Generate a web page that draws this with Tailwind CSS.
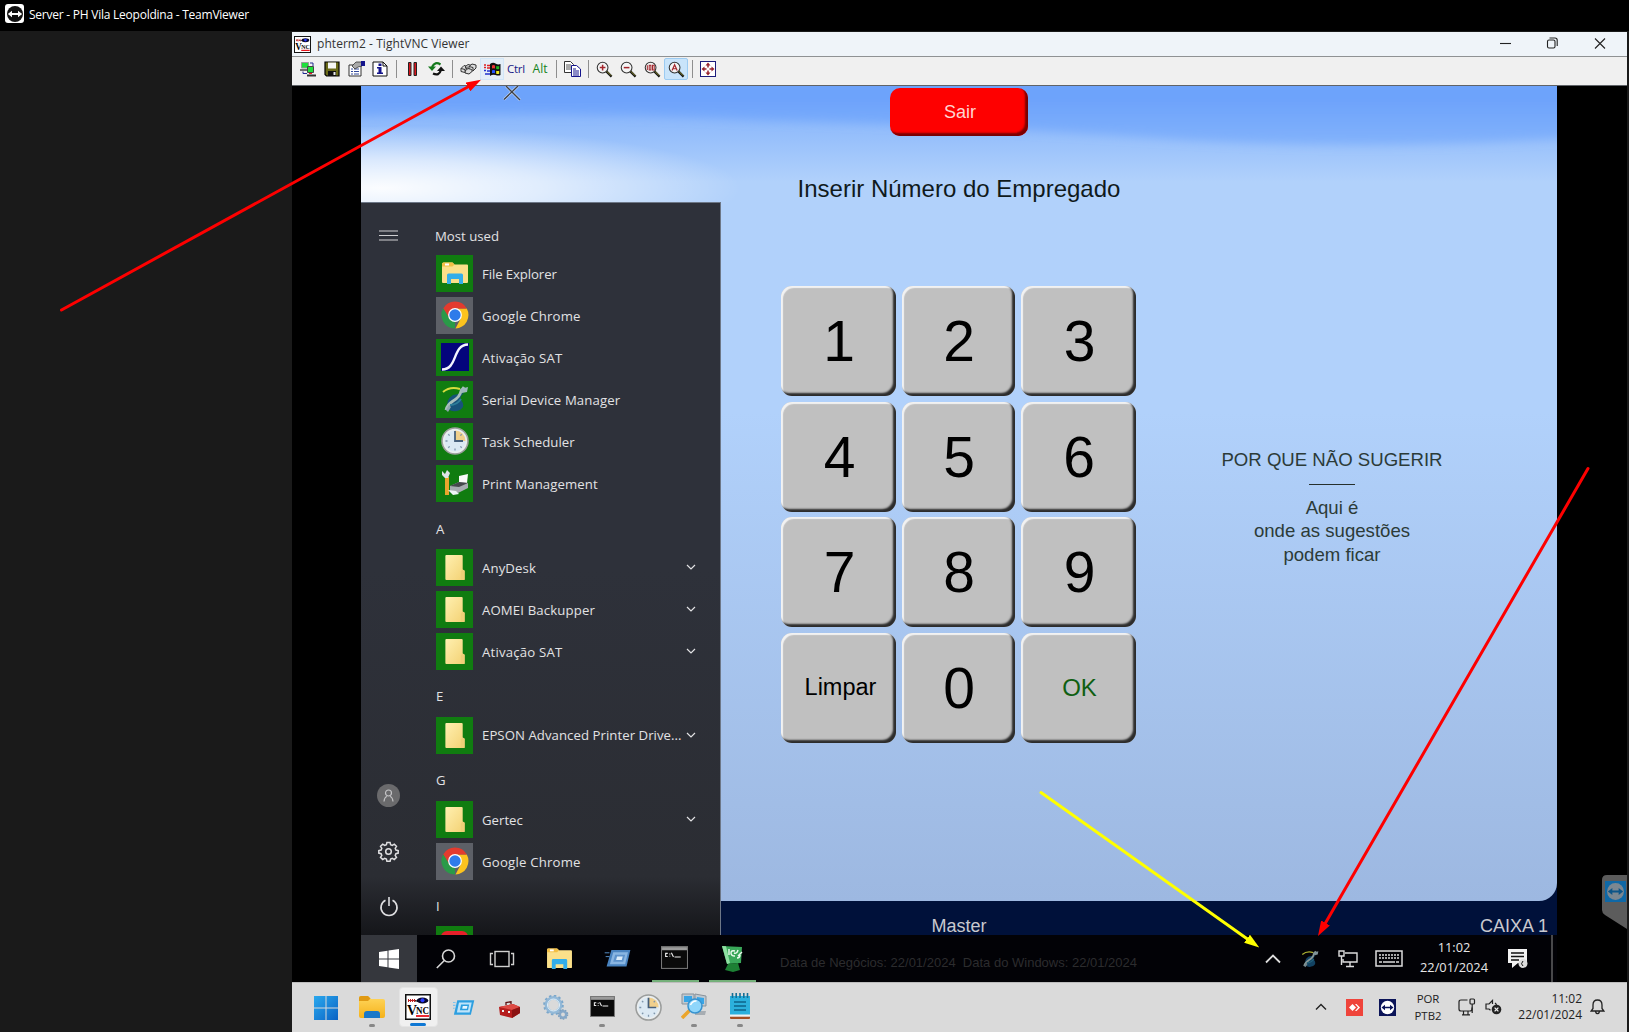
<!DOCTYPE html>
<html lang="pt-BR">
<head>
<meta charset="utf-8">
<title>Server - PH Vila Leopoldina - TeamViewer</title>
<script src="https://cdn.jsdelivr.net/npm/@tailwindcss/browser@4"></script>
</head>
<body class="w-[1629px] h-[1032px] overflow-hidden bg-[#1a1a1a] font-['Open_Sans','Noto_Sans',sans-serif] relative flex flex-col">

<!-- shared icon symbols -->
<svg width="0" height="0" class="absolute">
  <defs>
    <linearGradient id="fold" x1="0" y1="0" x2="1" y2="1"><stop offset="0" stop-color="#fff0b0"/><stop offset="1" stop-color="#f3d173"/></linearGradient>
    <linearGradient id="yel" x1="0" y1="0" x2="0" y2="1"><stop offset="0" stop-color="#ffd75e"/><stop offset="1" stop-color="#f5b21b"/></linearGradient>
    <linearGradient id="win" x1="0" y1="0" x2="1" y2="1"><stop offset="0" stop-color="#2aa9ee"/><stop offset="1" stop-color="#0a62c4"/></linearGradient>
    <symbol id="explorer" viewBox="0 0 28 24">
      <path d="M1 3q0-1.5 1.500-1.500h9l2 2H26q1 0 1 1V21q0 1-1 1H2q-1 0-1-1z" fill="#fbe08a"/>
      <path d="M1 3q0-1.500 1.500-1.500h9l2 2-2 2H1z" fill="#f3bf45"/><rect x="4" y="2.500" width="4" height="2" fill="#fff"/>
      <path d="M6 23v-9q0-1.500 1.500-1.500h13q1.500 0 1.500 1.500v9h-4v-5h-8v5z" fill="#33aeea"/>
    </symbol>
    <symbol id="chrome" viewBox="0 0 28 28">
      <path d="M14 14V27.500A13.500 13.500 0 0 1 2.300 7.250z" fill="#2a9a48"/>
      <path d="M14 7.500H25.800A13.500 13.500 0 0 1 14.500 27.500L20 17z" fill="#fcc31e"/>
      <path d="M14 7.500H25.800A13.500 13.500 0 0 0 2.300 7.300L8.300 17z" fill="#e33b2e"/>
      <circle cx="14" cy="14" r="6.900" fill="#fff"/><circle cx="14" cy="14" r="5.700" fill="#2f7bea"/>
    </symbol>
    <symbol id="sat" viewBox="0 0 28 28"><rect width="28" height="28" fill="#04047c"/><path d="M1 26.500C17 26.500 11 2 27 1.500" fill="none" stroke="#f4f4ff" stroke-width="2.400"/></symbol>
    <symbol id="serial" viewBox="0 0 28 28">
      <path d="M12 10q-8 5-5 14 5 4 12 1 6-4 1-10-2-3 3-7" fill="#17527a"/>
      <path d="M2 7q7-6 17-3" fill="none" stroke="#d6dc3d" stroke-width="2"/>
      <path d="M5 25q1-5 7-9 7-4 8-10l3-4" fill="none" stroke="#a9bfbc" stroke-width="2.800"/>
      <path d="M19 4l8-2-1 5-5 1z" fill="#9fb8bd"/><path d="M9 20q7 0 11-6" fill="none" stroke="#2d7c99" stroke-width="2"/>
      <path d="M5 25l3-5 2 2-3 5z" fill="#8ea6ad"/>
    </symbol>
    <symbol id="clock" viewBox="0 0 28 28">
      <circle cx="14" cy="14" r="13" fill="#e9edef" stroke="#9b9d9c" stroke-width="1.600"/>
      <path d="M14 14V3.500A10.500 10.500 0 0 1 24.500 14z" fill="#f0cf8c"/>
      <path d="M14 3.500A10.500 10.500 0 1 0 24.500 14H14z" fill="#dbe9f4"/>
      <path d="M14 4v10h8" fill="none" stroke="#47607c" stroke-width="1.800"/>
      <path d="M4.500 14h2M14 21.500v2M7.300 7.300l1.300 1.300M7.300 20.700l1.300-1.300M20.700 20.700l-1.300-1.300M20.700 7.300l-1.300 1.300" stroke="#7f96ab" stroke-width="1.300"/>
    </symbol>
    <symbol id="print" viewBox="0 0 28 28">
      <path d="M4 8h4v18H4z" fill="#e9a62c"/><path d="M1 2l3 3 2-4 3 3-2 5H4L1 6z" fill="#dfe4e6"/>
      <path d="M18 7l9-2-1 9-8 1z" fill="#fafafa"/><path d="M9 17l9-4 9 1v5l-10 5-8-2z" fill="#a7acb1"/><path d="M9 17l9-4 9 1-9 4z" fill="#45484c"/><path d="M7 21l8 1 3 3-6 1z" fill="#eef4f8"/>
    </symbol>
    <symbol id="folder" viewBox="0 0 22 26"><path d="M1 1q0-1 1-1h16q1 0 1 1v14l2 1.500V25q0 1-1 1H2q-1 0-1-1z" fill="url(#fold)"/><path d="M17 17l2-2 2 1.500V26h-4z" fill="#efcf78"/></symbol>
    <symbol id="run" viewBox="0 0 28 20"><path d="M7 1.500H27L23 18.500H3z" fill="#2d9fe0" /><path d="M9 4H24L21.500 15.800H6.500z" fill="#bfe4fa"/><path d="M11.500 6.500H21L19.600 13.300H10z" fill="#2d9fe0"/><path d="M13.500 8.300H19L18.300 11.500H12.800z" fill="#e6f6ff"/><path d="M0 4h5M1 7.500h4M0 11h4" stroke="#7cc4ee" stroke-width="1.200"/></symbol>
    <symbol id="cmd" viewBox="0 0 26 22"><rect x=".5" y=".5" width="25" height="21" fill="#0a0a0a" stroke="#777"/><rect x="1" y="1" width="24" height="3" fill="#9b9b9b"/><path d="M6.500 7H4.500v3h2M8.500 7.200v.8M8.500 9.300v.8M10 6.500l2 4M13 10.500h6" stroke="#eee" stroke-width="1.100" fill="none"/></symbol>
    <symbol id="chev" viewBox="0 0 10 6"><path d="M1 1l4 4 4-4" fill="none" stroke="currentColor" stroke-width="1.200"/></symbol>
    <symbol id="vnc" viewBox="0 0 26 26">
      <rect x=".75" y=".75" width="24.500" height="24.500" fill="#fff" stroke="#111" stroke-width="1.500"/>
      <path d="M3 5l3 3M6 5L3 8M7 5l3 3M10 5L7 8M3 6.500h8" stroke="#b22" stroke-width="1"/><ellipse cx="17.500" cy="6.500" rx="5.800" ry="3" fill="#0a0a30"/><circle cx="17.500" cy="6.300" r="2" fill="#2a3cff"/><path d="M10 7h3" stroke="#000"/>
      <text x="2" y="21" font-family="Liberation Serif, serif" font-weight="bold" font-size="15" textLength="10" lengthAdjust="spacingAndGlyphs">V</text>
      <text x="11" y="19.500" font-family="Liberation Serif, serif" font-weight="bold" font-size="10" textLength="13" lengthAdjust="spacingAndGlyphs">NC</text>
      <path d="M11 22h13" stroke="#e8141c" stroke-width="1.800"/>
    </symbol>
    <symbol id="tvarrow" viewBox="0 0 18 18"><circle cx="9" cy="9" r="8" fill="var(--bg)"/><path d="M1.800 9l4.200-3.200v2.200h6V5.800L16.200 9 12 12.200V10H6v2.200z" fill="var(--fg)"/></symbol>
    <symbol id="lens" viewBox="0 0 18 18"><circle cx="7" cy="7" r="5.700" fill="#f4f4f4" stroke="#333" stroke-width="1.100"/><path d="M11 11l5.500 5.500" stroke="#111" stroke-width="2.400"/><path d="M11.500 11l4.500 4.500" stroke="#b8b83a" stroke-width=".8"/></symbol>
  </defs>
</svg>

<!-- TeamViewer title bar -->
<header class="h-[31px] bg-black flex items-center pl-[5px] pb-[2px] shrink-0">
  <span class="w-[19px] h-[19px] mt-[-2px] rounded-[3px] bg-white flex items-center justify-center"><svg class="w-[18px] h-[18px] [--bg:#111] [--fg:#fff]"><use href="#tvarrow"/></svg></span>
  <span class="ml-[5px] text-white text-[12px] leading-4 tracking-[-0.24px] whitespace-nowrap">Server - PH Vila Leopoldina - TeamViewer</span>
</header>

<div class="flex flex-1 min-h-0">
  <aside class="w-[292px] shrink-0"></aside>
  <main class="w-[1335px] mt-px flex flex-col shrink-0">
    <!-- VNC title bar -->
    <div class="h-[25px] bg-[#eff4f9] border-b border-[#8f9294] flex items-center shrink-0">
      <svg class="ml-[2px] w-[17px] h-[17px]"><use href="#vnc"/></svg>
      <span class="ml-[6px] text-[12px] leading-4 tracking-[0.050px] text-[#333] whitespace-nowrap">phterm2 - TightVNC Viewer</span>
      <svg class="ml-auto mr-[15px] mt-[-1px]" width="120" height="16" fill="none" stroke="#222" stroke-width="1.100"><path d="M8 7.500h11"/><rect x="55.500" y="4" width="7.500" height="8" rx="1.500"/><path d="M57.500 2h5.500q2.200 0 2.200 2.200V10"/><path d="M103 2.500l10 10M113 2.500l-10 10"/></svg>
    </div>
    <!-- VNC toolbar -->
    <div class="h-[29px] bg-[#f0f0f0] border-b border-[#5f6368] flex items-center pl-1 pb-[4px] text-[12px] shrink-0">
      <span class="w-6 flex justify-center"><svg width="16" height="16"><path d="M1.500 1.500h7v5.500h-7z" fill="#1ee03a" stroke="#999"/><path d="M0 9h7" stroke="#444" stroke-width="1.500"/><path d="M7.500 5.500h6v6h-6z" fill="#1ee03a" stroke="#444"/><path d="M7 13.500h9v2H7z" fill="#333"/><path d="M10 2h3v3M3 10.500v2h4" fill="none" stroke="#222a90"/><path d="M9 12.500h3" stroke="#e22"/></svg></span>
      <span class="w-6 flex justify-center"><svg width="16" height="16"><path d="M1 1h14v14H2.500L1 13.500z" fill="#6b6b1a" stroke="#000" stroke-width="1.200"/><path d="M4 1.500h8v6H4z" fill="#f6f6f6"/><path d="M4 10h8v5H4z" fill="#111"/><path d="M9.500 11h2v3h-2z" fill="#eee"/></svg></span>
      <span class="w-6 flex justify-center"><svg width="17" height="16"><path d="M1 4h12v11H1z" fill="#fff" stroke="#333"/><path d="M3 8h2M6 8h5M3 10.500h2M6 10.500h5M3 13h2M6 13h5" stroke="#334a9c"/><path d="M4 5l4-4h6v4l-4 1-3 2z" fill="#a9a9a9" stroke="#333" stroke-width=".8"/><path d="M13 0h4v5h-4z" fill="#14148c"/></svg></span>
      <span class="w-6 flex justify-center"><svg width="16" height="16"><path d="M1 1h10l4 4v10H1z" fill="#fff" stroke="#111"/><path d="M11 1v4h4" fill="none" stroke="#111"/><path d="M6.500 2.500h3v2.500h-3zM5 6h4.500v5.500H11V13H5v-1.500h1.500v-4H5z" fill="#14148c"/></svg></span>
      <span class="w-2 flex justify-center"><i class="w-px h-[18px] bg-[#8e8e8e]"></i></span>
      <span class="w-6 flex justify-center"><svg width="9" height="14"><path d="M.5.500h2.500v13H.5zM6 .5h2.500v13H6z" fill="#d8141c" stroke="#222"/></svg></span>
      <span class="w-6 flex justify-center"><svg width="17" height="16" fill="none" stroke-width="2.200"><path d="M12.500 3.500Q7 0 4 6" stroke="#157a1d"/><path d="M0 5.500h8L4 10z" fill="#157a1d"/><path d="M5 12.500q6 3 8-3.500" stroke="#111"/><path d="M9 10h8l-4-4.500z" fill="#111"/></svg></span>
      <span class="w-2 flex justify-center"><i class="w-px h-[18px] bg-[#8e8e8e]"></i></span>
      <span class="w-6 flex justify-center"><svg width="17" height="12" fill="#ddd" stroke="#333"><path d="M1 5.500l3-3 4 1v3l-3 3-4-1z"/><path d="M5 4l3-2.500 4 1v3l-3 2z"/><path d="M9 3.500L12 1l4 1v3l-3 3-4-1z"/><path d="M5 8l3-2.500 4 1v2L9 11l-4-1z"/><path d="M1 5.500l4 1v3M5 6.500l3-3M9 3.500l4 1v3"/></svg></span>
      <span class="w-6 h-[22px] flex items-center justify-center bg-[#e3eef8] border border-[#d2e6f7]"><svg width="17" height="15" class="shrink-0"><path d="M6 2Q9 0 11.500 1.500T16.500 2V13q-2 1-5 0t-5.500 1z" fill="#111"/><path d="M8 3.500q1.500-1 3 0v3q-1.500-.7-3 0z" fill="#e33"/><path d="M12.200 4q1.500.6 3 0v3q-1.500.6-3 0z" fill="#2b2"/><path d="M8 8.300q1.500-.8 3 0v3q-1.500-.7-3 0z" fill="#25f"/><path d="M12.200 8.800q1.500.6 3 0v3q-1.500.6-3 0z" fill="#ee2"/><path d="M0 3h2M3 3.500h3M0 5.500h2M3 6h3" stroke="#d22" stroke-width="1.500"/><path d="M0 8.500h2M3 9h3M1 12h5" stroke="#23c" stroke-width="1.500"/></svg></span>
      <span class="w-6 text-center text-[11.500px] leading-4 tracking-[-0.2px] text-[#1a1a86]">Ctrl</span>
      <span class="w-6 text-center leading-4 text-[#17821d]">Alt</span>
      <span class="w-2 flex justify-center"><i class="w-px h-[18px] bg-[#8e8e8e]"></i></span>
      <span class="w-6 flex justify-center"><svg width="17" height="16"><path d="M.5.500h6l3 3v8h-9z" fill="#fff" stroke="#333"/><path d="M2 4h5M2 6h5M2 8h5" stroke="#555"/><path d="M7.500 4.500h5l4 3.500v7.500h-9z" fill="#fff" stroke="#14148c"/><path d="M9 8h3M9 10h6M9 12h6M9 14h6" stroke="#14148c"/></svg></span>
      <span class="w-2 flex justify-center"><i class="w-px h-[18px] bg-[#8e8e8e]"></i></span>
      <span class="w-6 flex justify-center"><svg width="17" height="17" viewBox="0 0 18 18"><use href="#lens"/><path d="M4 7h6M7 4v6" stroke="#a3262c" stroke-width="1.600"/></svg></span>
      <span class="w-6 flex justify-center"><svg width="17" height="17" viewBox="0 0 18 18"><use href="#lens"/><path d="M4 7h6" stroke="#a3262c" stroke-width="1.600"/></svg></span>
      <span class="w-6 flex justify-center"><svg width="17" height="17" viewBox="0 0 18 18"><use href="#lens"/><path d="M3.500 4.500v5M5.500 4.500h1.800v5H5.500zM9 4.500h1.800v5H9z" fill="none" stroke="#a3262c" stroke-width="1.100"/></svg></span>
      <span class="w-6 h-[22px] flex items-center justify-center rounded-[2px] bg-[#c9e4fa] border border-[#9ccbf2]"><svg width="17" height="17" viewBox="0 0 18 18"><use href="#lens"/><path d="M4.300 10L7 4l2.700 6M5.200 8.200h3.600" fill="none" stroke="#a3262c" stroke-width="1.300"/></svg></span>
      <span class="w-2 flex justify-center"><i class="w-px h-[18px] bg-[#8e8e8e]"></i></span>
      <span class="w-6 flex justify-center"><svg width="16" height="16"><rect x=".5" y=".5" width="15" height="15" fill="#fff" stroke="#1c1c7c"/><path d="M8 1.500l2.500 3H5.500zM8 14.500l-2.500-3h5zM1.500 8l3-2.500v5zM14.500 8l-3-2.500v5z" fill="#96222c"/><path d="M8 3v3.500M8 9.500V13M3 8h3.500M9.500 8H13" stroke="#96222c" stroke-width="1.500"/></svg></span>
    </div>

    <!-- remote desktop -->
    <div class="h-[896px] bg-black flex pl-[69px] shrink-0">
      <div class="w-[1196px] h-[896px] relative overflow-hidden flex flex-col bg-[#00113a]">
        <section class="h-[815px] relative overflow-hidden shrink-0 rounded-br-[18px] bg-linear-to-b from-[#b1d1fb] from-40% to-[#9db8e1]">
          <svg class="absolute inset-0" width="1196" height="150">
            <defs>
              <linearGradient id="sky" x1="0" y1="0" x2="0" y2="1"><stop offset="0" stop-color="#70a4fd"/><stop offset=".4" stop-color="#6ca2fb"/><stop offset="1" stop-color="#82b2fb"/></linearGradient>
              <linearGradient id="haze" x1="0" y1="0" x2="0" y2="1"><stop offset=".3" stop-color="#8ab7fb"/><stop offset="1" stop-color="#b1d1fb"/></linearGradient>
              <radialGradient id="glow"><stop offset="0" stop-color="#fff" stop-opacity=".95"/><stop offset=".45" stop-color="#fff" stop-opacity=".6"/><stop offset="1" stop-color="#fff" stop-opacity="0"/></radialGradient>
              <filter id="b" x="-10%" y="-50%" width="120%" height="200%"><feGaussianBlur stdDeviation="5"/></filter>
            </defs>
            <rect width="1196" height="96" fill="url(#haze)"/>
            <path d="M-20 -20H1230V50Q1000 66 800 52T400 34Q200 24 -20 30z" fill="url(#sky)" filter="url(#b)"/>
            <ellipse cx="20" cy="102" rx="360" ry="62" fill="url(#glow)"/>
          </svg>
          <div class="relative flex flex-col items-center pt-[2px] font-['Liberation_Sans',sans-serif]">
            <button class="w-[138px] h-[48px] rounded-[10px] bg-[#fe0000] shadow-[inset_-3px_-3px_2px_#7a0000] text-[18px] leading-6 text-[#ffd4d0] pl-[2px]">Sair</button>
            <h1 class="mt-[39px] h-[28px] text-[24px] leading-7 text-[#101a1c] whitespace-nowrap">Inserir Número do Empregado</h1>
            <div class="mt-[83px] w-full flex pl-[420px]">
              <div class="grid grid-cols-[115px_113px_115px] gap-x-[6px] gap-y-[5.500px] auto-rows-[110px] text-[57px] text-black">
                <button class="rounded-[11px] bg-[#c0c0c0] shadow-[inset_-3px_-3px_2px_#2c2c2c,inset_2px_2px_1px_#f2f2f2] pt-[2px] pl-[1px]">1</button>
                <button class="rounded-[11px] bg-[#c0c0c0] shadow-[inset_-3px_-3px_2px_#2c2c2c,inset_2px_2px_1px_#f2f2f2] pt-[2px] pl-[1px]">2</button>
                <button class="rounded-[11px] bg-[#c0c0c0] shadow-[inset_-3px_-3px_2px_#2c2c2c,inset_2px_2px_1px_#f2f2f2] pt-[2px] pl-[2px]">3</button>
                <button class="rounded-[11px] bg-[#c0c0c0] shadow-[inset_-3px_-3px_2px_#2c2c2c,inset_2px_2px_1px_#f2f2f2] pt-[2px] pl-[2px]">4</button>
                <button class="rounded-[11px] bg-[#c0c0c0] shadow-[inset_-3px_-3px_2px_#2c2c2c,inset_2px_2px_1px_#f2f2f2] pt-[2px] pl-[1px]">5</button>
                <button class="rounded-[11px] bg-[#c0c0c0] shadow-[inset_-3px_-3px_2px_#2c2c2c,inset_2px_2px_1px_#f2f2f2] pt-[2px] pl-[1px]">6</button>
                <button class="rounded-[11px] bg-[#c0c0c0] shadow-[inset_-3px_-3px_2px_#2c2c2c,inset_2px_2px_1px_#f2f2f2] pt-[2px] pl-[2px]">7</button>
                <button class="rounded-[11px] bg-[#c0c0c0] shadow-[inset_-3px_-3px_2px_#2c2c2c,inset_2px_2px_1px_#f2f2f2] pt-[2px] pl-[1px]">8</button>
                <button class="rounded-[11px] bg-[#c0c0c0] shadow-[inset_-3px_-3px_2px_#2c2c2c,inset_2px_2px_1px_#f2f2f2] pt-[2px] pl-[2px]">9</button>
                <button class="rounded-[11px] bg-[#c0c0c0] shadow-[inset_-3px_-3px_2px_#2c2c2c,inset_2px_2px_1px_#f2f2f2] pt-[1px] pl-[4px] text-[23.500px]">Limpar</button>
                <button class="rounded-[11px] bg-[#c0c0c0] shadow-[inset_-3px_-3px_2px_#2c2c2c,inset_2px_2px_1px_#f2f2f2] pt-[2px] pl-[1px]">0</button>
                <button class="rounded-[11px] bg-[#c0c0c0] shadow-[inset_-3px_-3px_2px_#2c2c2c,inset_2px_2px_1px_#f2f2f2] pl-[2px] text-[24px] text-[#0f5f12]">OK</button>
              </div>
              <div class="flex-1 pr-[29px] pt-[162px] flex flex-col items-center text-[18.600px] leading-[23.500px] text-[#2c3b38] text-center whitespace-nowrap">
                <p>POR QUE NÃO SUGERIR</p>
                <i class="w-[46px] h-px mt-[12px] mb-[11px] bg-[#26302c]"></i>
                <p>Aqui é<br>onde as sugestões<br>podem ficar</p>
              </div>
            </div>
          </div>
        </section>
        <div class="h-[34px] grid grid-cols-3 items-center font-['Liberation_Sans',sans-serif] text-[18px] leading-6 text-[#c9c9cf] pt-[15px] shrink-0 content-center">
          <span></span><span class="text-center">Master</span><span class="text-right pr-[9px]">CAIXA 1</span>
        </div>
        <!-- remote taskbar -->
        <div class="h-[47px] relative bg-[#020206] flex items-center text-[#d8d8d8] shrink-0">
          <span class="w-14 h-full bg-[#35373d] flex items-center justify-center"><svg width="20" height="20" fill="#fff"><path d="M0 3l8.500-1.300V9.400H0zM9.500 1.500L20 0v9.400H9.500zM0 10.500h8.500v7.800L0 17zM9.500 10.500H20V20l-10.500-1.500z"/></svg></span>
          <span class="w-[57px] flex justify-center"><svg width="20" height="20" fill="none" stroke="#d8d8d8" stroke-width="1.600"><circle cx="12.500" cy="7" r="6"/><path d="M8.300 11.500L.8 19"/></svg></span>
          <span class="w-14 flex justify-center pr-px"><svg width="26" height="18" fill="none" stroke="#d0d0d0" stroke-width="1.400"><rect x="6" y="1.500" width="14" height="15"/><path d="M4 3.500H1.500v11H4M22 3.500h2.500v11H22"/></svg></span>
          <span class="w-[59px] flex justify-center"><svg width="27" height="23"><use href="#explorer"/></svg></span>
          <span class="w-[58px] flex justify-center"><svg width="28" height="19" viewBox="0 0 28 20"><path d="M7 1H27L23 18.500H2z" fill="#4983c0"/><path d="M9 3.500H24.500L21.500 16H5.500z" fill="#8ab6e2"/><path d="M11 6H21.500L19.500 13.500H9z" fill="#5d92cb"/><path d="M13 8h6l-1 3.500h-6z" fill="#dcecfa"/><path d="M0 4h5M1 8h4" stroke="#5792ca"/></svg></span>
          <span class="w-[57px] h-full flex items-center justify-center pr-[2px]"><svg width="27" height="23" class="mt-[-2px]"><use href="#cmd"/></svg></span>
          <span class="w-14 h-full flex items-center justify-center"><svg width="24" height="27"><path d="M2 1l20 1-1 16-14 1z" fill="#3aa85a"/><path d="M2 1l5 18 3-1L6 1.200z" fill="#8fe0a2"/><path d="M8 19l10-1 2 7-7 2-8-2z" fill="#1d8034"/><path d="M15 6q-4-1-4 2t4 3M18 5q-1 4-4 3M9 4v6M18 11l4-4M17 13q3 0 3-3" fill="none" stroke="#eefbf0" stroke-width="1.400"/></svg></span>
          <i class="absolute left-[291px] bottom-0 w-[47px] h-[2px] bg-[#74b07a]"></i>
          <i class="absolute left-[348px] bottom-0 w-[47px] h-[2px] bg-[#74b07a]"></i>
          <span class="ml-[20px] mt-[9px] w-[371px] font-['Liberation_Sans',sans-serif] text-[13px] leading-4 text-[#2c2c2e] whitespace-pre">Data de Negócios: 22/01/2024  Data do Windows: 22/01/2024</span>
          <span class="ml-[114px] flex items-center">
            <svg width="16" height="10" fill="none" stroke="#ddd" stroke-width="1.800"><path d="M1 8.500L8 1.500l7 7"/></svg>
            <svg width="18" height="18" viewBox="0 0 28 28" class="ml-[20px] opacity-80"><use href="#serial"/></svg>
            <svg width="20" height="18" fill="none" stroke="#ddd" stroke-width="1.400" class="ml-[19px]"><path d="M7 3h12v9H5V9M12 12v4M8 16.500h8"/><path d="M1 1h5v5H1zM3.500 6v9"/></svg>
            <svg width="28" height="17" class="ml-[17px]" fill="none" stroke="#ddd"><rect x="1" y="1" width="26" height="15" stroke-width="1.500"/><path d="M4 5h20M4 8h20" stroke-width="1.500" stroke-dasharray="2 1"/><path d="M4 12h3M8 12h12M21 12h3" stroke-width="1.500"/></svg>
          </span>
          <span class="ml-[16px] w-[70px] text-center text-[12.800px] leading-[20.500px] whitespace-nowrap text-[#e6e6e6] pb-[3px]">11:02<br>22/01/2024</span>
          <svg width="20" height="20" class="ml-[19px]"><path d="M0 0h19v14H10l-6 5v-5H0z" fill="#f2f2f2"/><path d="M3 4h13M3 7.500h13M3 11h8" stroke="#111" stroke-width="1.300"/><circle cx="15" cy="14.500" r="4.500" fill="#ddd"/><path d="M15 12q-3 3 0 5" stroke="#111" fill="none"/></svg>
          <i class="ml-auto mr-[4px] w-[2px] h-full bg-[#48484a]"></i>
        </div>

        <!-- close mark of the kiosk window -->
        <svg class="absolute left-[142px] top-0" width="20" height="16"><path d="M1 13.500L15 0M3 0l14 14" stroke="#e7eef8" stroke-width="2.600" opacity=".7"/><path d="M1 13.500L15 0M3 0l14 14" stroke="#3e4046" stroke-width="1.400"/></svg>

        <!-- start menu -->
        <div class="absolute left-0 top-[116px] w-[360px] h-[733px] overflow-hidden flex border-t border-r border-[#6d7787] bg-linear-to-b from-[#2e313a] from-50% via-[#2b2d33] via-92% to-[#15161a] text-[#e2e2e4] text-[13.200px]">
          <nav class="w-[75px] flex flex-col items-center pr-[20px] pt-[27px] pb-[18px] shrink-0">
            <svg width="19" height="11" stroke="#cfcfd2" stroke-width="1.200"><path d="M0 1h19M0 5.500h19M0 10h19"/></svg>
            <span class="mt-auto w-[23px] h-[23px] rounded-full bg-[#6a6a6c] flex items-center justify-center"><svg width="11" height="13" fill="none" stroke="#c4c4c6" stroke-width="1.200"><circle cx="5.500" cy="4" r="3"/><path d="M1 12.500q.5-4.500 3-5M10 12.500q-.5-4.500-3-5"/></svg></span>
            <svg class="mt-[34px]" width="21" height="21" fill="none" stroke="#dedee0" stroke-width="1.500"><circle cx="10.500" cy="10.500" r="2.800"/><path d="M8.900 1.500h3.200l.5 2.300 1.700.7 2-1.300 2.200 2.200-1.300 2 .7 1.700 2.300.5v2.500l-2.300.6-.7 1.700 1.300 2-2.200 2.200-2-1.300-1.700.7-.5 2.200H8.900l-.5-2.200-1.700-.7-2 1.300-2.200-2.200 1.300-2-.7-1.700-2.300-.6V9.600l2.300-.5.7-1.700-1.300-2 2.200-2.200 2 1.300 1.700-.7z"/></svg>
            <svg class="mt-[34px]" width="20" height="21" fill="none" stroke="#dedee0" stroke-width="1.600"><path d="M6.500 4.300a8 8 0 1 0 7 0M10 1v9"/></svg>
          </nav>
          <ul class="w-[260px] pt-[7px] [&_svg]:shrink-0 whitespace-nowrap">
            <li class="h-[42px] flex items-end pb-[6px] leading-5 -ml-px">Most used</li>
            <li class="h-[42px] flex items-center"><span class="w-[37px] h-[37px] bg-[#107c10] flex items-center justify-center"><svg width="28" height="24"><use href="#explorer"/></svg></span><span class="ml-[9px] pt-[3px] tracking-[-0.1px]">File Explorer</span></li>
            <li class="h-[42px] flex items-center"><span class="w-[37px] h-[37px] bg-[#5d6067] flex items-center justify-center"><svg width="28" height="28"><use href="#chrome"/></svg></span><span class="ml-[9px] pt-[3px] tracking-[0.2px]">Google Chrome</span></li>
            <li class="h-[42px] flex items-center"><span class="w-[37px] h-[37px] bg-[#107c10] flex items-center justify-center"><svg width="28" height="28"><use href="#sat"/></svg></span><span class="ml-[9px] pt-[3px] tracking-[0.2px]">Ativação SAT</span></li>
            <li class="h-[42px] flex items-center"><span class="w-[37px] h-[37px] bg-[#107c10] flex items-center justify-center"><svg width="28" height="28"><use href="#serial"/></svg></span><span class="ml-[9px] pt-[3px] tracking-[0.1px]">Serial Device Manager</span></li>
            <li class="h-[42px] flex items-center"><span class="w-[37px] h-[37px] bg-[#107c10] flex items-center justify-center"><svg width="28" height="28"><use href="#clock"/></svg></span><span class="ml-[9px] pt-[3px]">Task Scheduler</span></li>
            <li class="h-[42px] flex items-center"><span class="w-[37px] h-[37px] bg-[#107c10] flex items-center justify-center"><svg width="28" height="28"><use href="#print"/></svg></span><span class="ml-[9px] pt-[3px] tracking-[0.080px]">Print Management</span></li>
            <li class="h-[42px] flex items-center pt-[9px]">A</li>
            <li class="h-[42px] flex items-center"><span class="w-[37px] h-[37px] bg-[#107c10] flex items-center justify-center"><svg width="22" height="25"><use href="#folder"/></svg></span><span class="ml-[9px] pt-[3px] tracking-[0.1px]">AnyDesk</span><svg class="ml-auto" width="10" height="6"><use href="#chev"/></svg></li>
            <li class="h-[42px] flex items-center"><span class="w-[37px] h-[37px] bg-[#107c10] flex items-center justify-center"><svg width="22" height="25"><use href="#folder"/></svg></span><span class="ml-[9px] pt-[3px] tracking-[0.130px]">AOMEI Backupper</span><svg class="ml-auto" width="10" height="6"><use href="#chev"/></svg></li>
            <li class="h-[42px] flex items-center"><span class="w-[37px] h-[37px] bg-[#107c10] flex items-center justify-center"><svg width="22" height="25"><use href="#folder"/></svg></span><span class="ml-[9px] pt-[3px] tracking-[0.2px]">Ativação SAT</span><svg class="ml-auto" width="10" height="6"><use href="#chev"/></svg></li>
            <li class="h-[42px] flex items-center pt-[7px]">E</li>
            <li class="h-[42px] flex items-center"><span class="w-[37px] h-[37px] bg-[#107c10] flex items-center justify-center"><svg width="22" height="25"><use href="#folder"/></svg></span><span class="ml-[9px] pt-[2px] tracking-[0.050px]">EPSON Advanced Printer Drive...</span><svg class="ml-auto" width="10" height="6"><use href="#chev"/></svg></li>
            <li class="h-[42px] flex items-center pt-[7px]">G</li>
            <li class="h-[42px] flex items-center"><span class="w-[37px] h-[37px] bg-[#107c10] flex items-center justify-center"><svg width="22" height="25"><use href="#folder"/></svg></span><span class="ml-[9px] pt-[3px]">Gertec</span><svg class="ml-auto" width="10" height="6"><use href="#chev"/></svg></li>
            <li class="h-[42px] flex items-center"><span class="w-[37px] h-[37px] bg-[#5d6067] flex items-center justify-center"><svg width="28" height="28"><use href="#chrome"/></svg></span><span class="ml-[9px] pt-[3px] tracking-[0.2px]">Google Chrome</span></li>
            <li class="h-[42px] flex items-center pt-[7px]">I</li>
            <li class="pt-[2px]"><span class="w-[37px] h-[37px] bg-[#107c10] flex justify-center pt-[5px]"><i class="w-[27px] h-[27px] rounded-[6px] bg-[#e5202a]"></i></span></li>
          </ul>
        </div>
      </div>
    </div>

    <!-- local taskbar -->
    <div class="h-[50px] bg-[#dadada] border-t border-[#bdbdbd] flex items-center pl-[11px] text-[#222] shrink-0">
      <span class="w-[46px] h-full flex items-center justify-center"><svg width="24" height="24" fill="url(#win)"><path d="M0 0h11.500v11.500H0zM12.500 0H24v11.500H12.500zM0 12.500h11.500V24H0zM12.500 12.500H24V24H12.500z"/></svg></span>
      <span class="w-[46px] h-full flex flex-col items-center pt-[12px]"><svg width="26" height="24"><path d="M0 3q0-2 2-2h7l3 3h12q2 0 2 2v15q0 2-2 2H2q-2 0-2-2z" fill="url(#yel)"/><path d="M0 3q0-2 2-2h7l2.500 2.500L9 6H0z" fill="#e09a14"/><path d="M5 23v-4q0-3 3-3h10q3 0 3 3v4z" fill="#1a78c9"/></svg><i class="mt-[5px] w-[6px] h-[3px] rounded-full bg-[#888]"></i></span>
      <span class="w-[46px] h-full flex flex-col items-center pt-[4px]"><span class="w-[39px] h-[40px] rounded-[4px] bg-[#f0f0f0] border border-[#e4e4e4] flex flex-col items-center pt-[6px]"><svg width="26" height="26"><use href="#vnc"/></svg><i class="mt-[3px] w-[16px] h-[3px] rounded-full bg-[#0f78d4] shrink-0"></i></span></span>
      <span class="w-[46px] h-full flex items-center justify-center"><svg width="23" height="17" viewBox="3 0 25 20"><use href="#run" width="28" height="20"/></svg></span>
      <span class="w-[46px] h-full flex items-center justify-center pt-[5px]"><svg width="25" height="18"><path d="M1 6l14-3 7 3v6l-8 5L2 14z" fill="#b51c1c"/><path d="M1 6l14-3 7 3-8 3z" fill="#dd4a44"/><path d="M14 9v8l8-5V6z" fill="#8a1212"/><path d="M8 4V1.500L13 .8V3" fill="none" stroke="#5a1010" stroke-width="1.300"/><path d="M4 9h2v2H4zM10 10h2v2h-2z" fill="#eee"/></svg></span>
      <span class="w-[46px] h-full flex items-center justify-center"><svg width="26" height="25" fill="none"><circle cx="10.500" cy="10" r="7.200" stroke="#93b9d8" stroke-width="3.500"/><circle cx="10.500" cy="10" r="9.400" stroke="#7ba7cb" stroke-width="1.800" stroke-dasharray="2.500 2.420"/><circle cx="10.500" cy="10" r="6" stroke="#e1f0fa"/><circle cx="20" cy="19.500" r="3.200" stroke="#86a8c8" stroke-width="2.500"/><circle cx="20" cy="19.500" r="4.700" stroke="#7c9fbe" stroke-width="1.200" stroke-dasharray="1.600 1.350"/></svg></span>
      <span class="w-[46px] h-full flex flex-col items-center pt-[13px]"><svg width="25" height="21"><use href="#cmd"/></svg><i class="mt-[7px] w-[6px] h-[3px] rounded-full bg-[#888]"></i></span>
      <span class="w-[46px] h-full flex items-center justify-center"><svg width="27" height="27"><use href="#clock"/></svg></span>
      <span class="w-[46px] h-full flex flex-col items-center pt-[10px]"><svg width="26" height="26"><path d="M1 1h12v10H1zM14 1l11 2v10H14z" fill="#bfc9d1" stroke="#8a939b"/><path d="M3 3h8v6H3zM16 4l7 1v6h-7z" fill="#38a5e6"/><path d="M14 18h11l-1 4H14z" fill="#a7adb2"/><path d="M9 17l-8 8" stroke="#eba52c" stroke-width="3.500"/><circle cx="14" cy="13" r="7" fill="#8fd6fb" stroke="#3792cf" stroke-width="1.500"/><path d="M9.500 12q2-4.500 6-4" fill="none" stroke="#fff" stroke-width="1.500"/></svg><i class="mt-[5px] w-[6px] h-[3px] rounded-full bg-[#888] shrink-0"></i></span>
      <span class="w-[46px] h-full flex flex-col items-center pt-[10px]"><svg width="20" height="26"><path d="M0 3h20v19H0z" fill="#2cb0dd"/><path d="M0 23.500h20V25q0 1-1 1H1q-1 0-1-1z" fill="#a34f24"/><path d="M0 21.500h20v2H0z" fill="#f2f2f2"/><path d="M2.500 0v5M6.200 0v5M10 0v5M13.800 0v5M17.500 0v5" stroke="#146f96" stroke-width="1.600"/><path d="M4 9h12M4 13h12M4 17h12" stroke="#0d638a" stroke-width="1.700"/></svg><i class="mt-[5px] w-[6px] h-[3px] rounded-full bg-[#888] shrink-0"></i></span>
      <span class="ml-auto mr-[22px] mb-px flex items-center">
        <svg width="12" height="8" fill="none" stroke="#222" stroke-width="1.400"><path d="M1 6.500l5-5 5 5"/></svg>
        <span class="ml-[19px] w-[17px] h-[17px] bg-[#ef443b] flex items-center justify-center"><svg width="11" height="7"><path d="M3.500 0L7 3.500 3.500 7 0 3.500z" fill="#fff"/><path d="M6 0h1.500L11 3.500 7.500 7H6l3-3.500z" fill="#fff"/></svg></span>
        <span class="ml-[16px] w-[17px] h-[17px] bg-[#0b1458] flex items-center justify-center"><svg class="w-[15px] h-[15px] [--bg:#fff] [--fg:#0b1458]" viewBox="0 0 18 18"><use href="#tvarrow"/></svg></span>
        <span class="ml-[16px] w-[32px] text-center text-[11.400px] leading-[17px]">POR<br>PTB2</span>
        <svg class="ml-[14px]" width="18" height="18" fill="none" stroke="#222" stroke-width="1.200"><path d="M9.500 2H3Q1 2 1 4v7q0 2 2 2h9q2 0 2-2V9.500M5.500 13v3.500M10 13v3.500M4 16.800h8"/><rect x="12" y="1" width="4.500" height="5" rx="1"/><path d="M14.200 6v9"/></svg>
        <svg class="ml-[9px]" width="17" height="16" fill="none" stroke="#222" stroke-width="1.200"><path d="M7.500 5V1.500L4 5H1v5h3l1.500 1.300M10 4q1.500 1 1.500 2.500"/><circle cx="11.500" cy="10.500" r="4.800" fill="#222" stroke="none"/><path d="M9.600 8.600l3.800 3.800M13.400 8.600l-3.800 3.800" stroke="#eee" stroke-width="1.300"/></svg>
        <span class="ml-[14px] w-[66px] text-right text-[12px] leading-[16.500px] whitespace-nowrap">11:02<br>22/01/2024</span>
        <svg class="ml-[8px]" width="15" height="16" fill="none" stroke="#222" stroke-width="1.300"><path d="M7.500 1Q3 1 3 6v3.500L1.200 12h12.600L12 9.500V6q0-5-4.500-5zM5.500 12.500q.5 2.200 2 2.200t2-2.200"/></svg>
      </span>
    </div>
  </main>
</div>

<!-- TeamViewer side handle -->
<svg class="absolute left-[1601px] top-[874px]" width="26" height="56"><path d="M26 1H6Q1 1 1 6V36q0 3 3 5l22 14z" fill="#5c5c5c"/><rect x="4" y="7" width="21" height="21" fill="#0f68a6"/><g class="[--bg:#7b8791] [--fg:#0d5588]"><use href="#tvarrow" x="5" y="8" width="19" height="19"/></g></svg>

<!-- annotation arrows -->
<svg class="absolute inset-0 pointer-events-none" width="1629" height="1032" stroke-linecap="round">
  <defs>
    <marker id="hr" viewBox="0 0 15 10" refX="3" refY="5" markerWidth="15" markerHeight="10" markerUnits="userSpaceOnUse" orient="auto"><path d="M0 0l15 5-15 5z" fill="#fe0000"/></marker>
    <marker id="hy" viewBox="0 0 15 10" refX="3" refY="5" markerWidth="15" markerHeight="10" markerUnits="userSpaceOnUse" orient="auto"><path d="M0 0l15 5-15 5z" fill="#ffff00"/></marker>
  </defs>
  <path d="M61.500 310L470.500 85.500" stroke="#fe0000" stroke-width="3" marker-end="url(#hr)"/>
  <path d="M1588 468.500L1324 925.500" stroke="#fe0000" stroke-width="3" marker-end="url(#hr)"/>
  <path d="M1041 792.500L1249.500 940.500" stroke="#ffff00" stroke-width="3" marker-end="url(#hy)"/>
</svg>
</body>
</html>
